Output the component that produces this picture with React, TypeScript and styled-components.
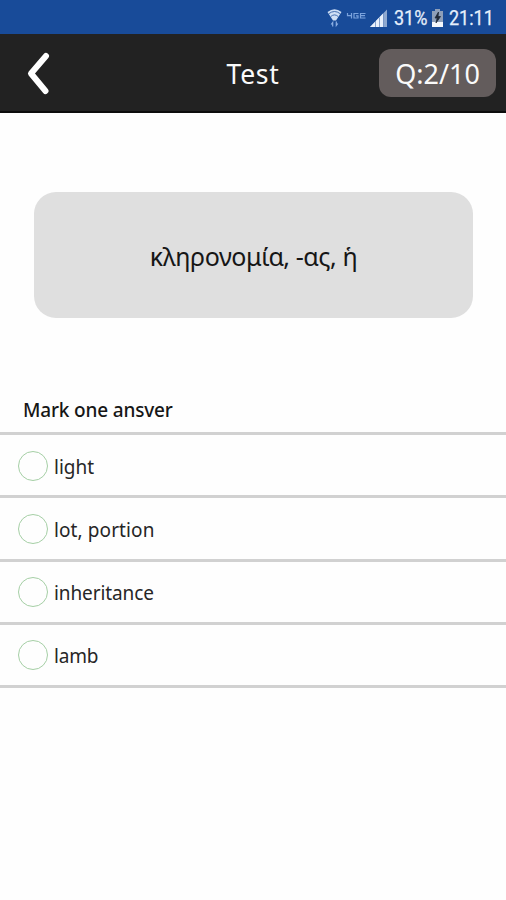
import React from "react";
import styled, { createGlobalStyle } from "styled-components";

const GlobalStyle = createGlobalStyle`
  * { box-sizing: border-box; }
  body { margin: 0; background: #fefefe; font-family: "Noto Sans", "Open Sans", sans-serif; }
`;

const Screen = styled.div`
  width: 506px;
  height: 900px;
  display: flex;
  flex-direction: column;
  background: #fefefe;
  overflow: hidden;
`;

const StatusBar = styled.div`
  height: 34px;
  flex: none;
  display: flex;
  align-items: center;
  justify-content: flex-end;
  padding: 1px 11px 0 0;
  background: #184b99;
`;

const StatusText = styled.span<{ $width: number; $gap: number }>`
  width: ${(p) => p.$width}px;
  margin-left: ${(p) => p.$gap}px;
  font: 400 20px/34px Roboto, sans-serif;
  white-space: nowrap;
  color: #e6effb;
  -webkit-text-stroke: 0.25px #e6effb;
  transform: scaleX(0.9);
  transform-origin: left center;
`;

const Header = styled.header`
  height: 79px;
  flex: none;
  display: grid;
  grid-template-columns: 127px 1fr 127px;
  align-items: center;
  background: #222222;
  border-bottom: 2px solid #0c0c0c;
`;

const BackButton = styled.button`
  display: flex;
  padding: 0 0 0 24px;
  border: 0;
  background: none;
`;

const Title = styled.h1`
  margin: 2px 0 0;
  font-weight: 400;
  font-size: 26.5px;
  line-height: 36px;
  letter-spacing: 0.7px;
  text-align: center;
  color: #fafafa;
`;

const Counter = styled.div`
  width: 117px;
  height: 48px;
  display: flex;
  align-items: center;
  justify-content: center;
  padding-top: 2px;
  border-radius: 12px;
  background: #635c5c;
  color: #fafafa;
  font-size: 27px;
`;

const WordCard = styled.section`
  width: 439px;
  height: 126px;
  margin: 79px 0 0 34px;
  flex: none;
  display: flex;
  align-items: center;
  justify-content: center;
  padding-top: 1px;
  border-radius: 22px;
  background: #dfdfdf;
  color: #161616;
  font-size: 25px;
  letter-spacing: -0.4px;
`;

const Prompt = styled.p`
  height: 114px;
  margin: 0;
  padding: 78px 0 0 23px;
  flex: none;
  font-size: 19px;
  line-height: 28px;
  font-weight: 500;
  letter-spacing: -0.17px;
  color: #161616;
`;

const Answers = styled.ul`
  margin: 0;
  padding: 0;
  list-style: none;
  border-top: 3px solid #d1d1d1;
`;

const Answer = styled.li`
  height: 63.25px;
  display: flex;
  align-items: center;
  gap: 6px;
  padding-left: 18px;
  border-bottom: 3px solid #d1d1d1;
`;

const Radio = styled.span`
  width: 30px;
  height: 30px;
  margin-top: 1px;
  border: 1px solid #a5cfa5;
  border-radius: 50%;
`;

const AnswerText = styled.span<{ $spacing: number }>`
  margin-top: 3px;
  font-size: 19px;
  line-height: 28px;
  letter-spacing: ${(p) => p.$spacing}px;
  color: #262626;
`;

const answers = [
  { text: "light", spacing: 0 },
  { text: "lot, portion", spacing: 0.1 },
  { text: "inheritance", spacing: -0.1 },
  { text: "lamb", spacing: -0.2 },
];

const StatusIcons = () => (
  <svg width="60" height="22" viewBox="327 6 60 22" fill="none">
    <path d="M327.5 11Q334.5 5.5 341.5 11L336 19.5h-3z" fill="#cfdff5" />
    <g stroke="#3562a8" strokeWidth="0.9">
      <path d="M328.8 12.7Q334.5 8.3 340.2 12.7M330.8 15.5Q334.5 12.3 338.2 15.5" />
    </g>
    <path d="M331.2 23.5l1.5-2v4M337.8 22.5l-1.5 2v-4" stroke="#8eb0e4" strokeWidth="1.2" />
    <g stroke="#7ba3dd" strokeWidth="1.2">
      <path d="M347.5 12v2.7h4.5M351.5 12v5.5M358.5 12.5h-4.5v4.5h4v-2.2h-2M365.5 12.5h-5v4.5h5M360.5 14.7h4.5" />
    </g>
    <path d="M370 26L387 8.5V26z" fill="#8fa9d0" />
    <path d="M370 26L383.5 12V26z" fill="#e8f0fb" />
    <path d="M375.5 20v6M379.5 16.5v9.5M383.5 12v14" stroke="#5d80b7" strokeWidth="0.7" />
  </svg>
);

const BatteryIcon = styled.svg`
  margin-left: 4px;
`;

export default function App() {
  return (
    <Screen>
      <GlobalStyle />
      <StatusBar>
        <StatusIcons />
        <StatusText $width={34} $gap={7}>31%</StatusText>
        <BatteryIcon width="11" height="18" viewBox="0 0 11 18">
          <path d="M3 0h5v2h3v16H0V2h3z" fill="#8e9fb9" />
          <path d="M0 13h11v5H0z" fill="#f4f7fc" />
          <path d="M6.5 3L3 9h2.2L4 14l4.5-6.5H6z" fill="#202938" stroke="#202938" strokeWidth="0.8" />
        </BatteryIcon>
        <StatusText $width={46} $gap={6}>21:11</StatusText>
      </StatusBar>
      <Header>
        <BackButton aria-label="Back">
          <svg width="30" height="50" viewBox="0 0 30 50" fill="none">
            <path d="M22 8L7 25.5L21.5 43" stroke="#fff" strokeWidth="6" strokeLinecap="round" strokeLinejoin="round" />
          </svg>
        </BackButton>
        <Title>Test</Title>
        <Counter>Q:2/10</Counter>
      </Header>
      <WordCard>κληρονομία, -ας, ἡ</WordCard>
      <Prompt>Mark one ansver</Prompt>
      <Answers>
        {answers.map((a) => (
          <Answer key={a.text}>
            <Radio />
            <AnswerText $spacing={a.spacing}>{a.text}</AnswerText>
          </Answer>
        ))}
      </Answers>
    </Screen>
  );
}
